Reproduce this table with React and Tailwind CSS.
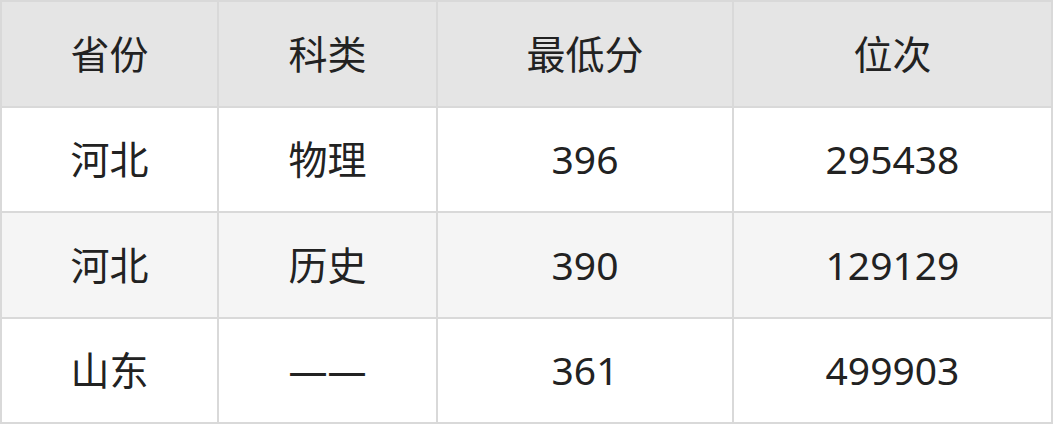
import React from 'react';

const header = ['省份', '科类', '最低分', '位次'];

const rows = [
  ['河北', '物理', '396', '295438'],
  ['河北', '历史', '390', '129129'],
  ['山东', '——', '361', '499903'],
];

function App() {
  const font = "font-['Noto_Sans','Noto_Sans_CJK_SC',sans-serif]";

  return (
    <div className={`w-[1053px] h-[424px] bg-[#d9d9d9] p-[2px] ${font}`}>
      <div className="grid h-full grid-cols-[215px_217px_294px_1fr] grid-rows-4 gap-[2px]">
        {header.map((h) => (
          <div key={h} className="flex items-center justify-center bg-[#e5e5e5] text-[39px] text-[#222]">
            {h}
          </div>
        ))}
        {rows.map((row, i) =>
          row.map((cell, j) => (
            <div
              key={`${i}-${j}`}
              className={`flex items-center justify-center text-[39px] text-[#222] ${i === 1 ? 'bg-[#f5f5f5]' : 'bg-white'}`}
            >
              {cell}
            </div>
          ))
        )}
      </div>
    </div>
  );
}

export default App;
